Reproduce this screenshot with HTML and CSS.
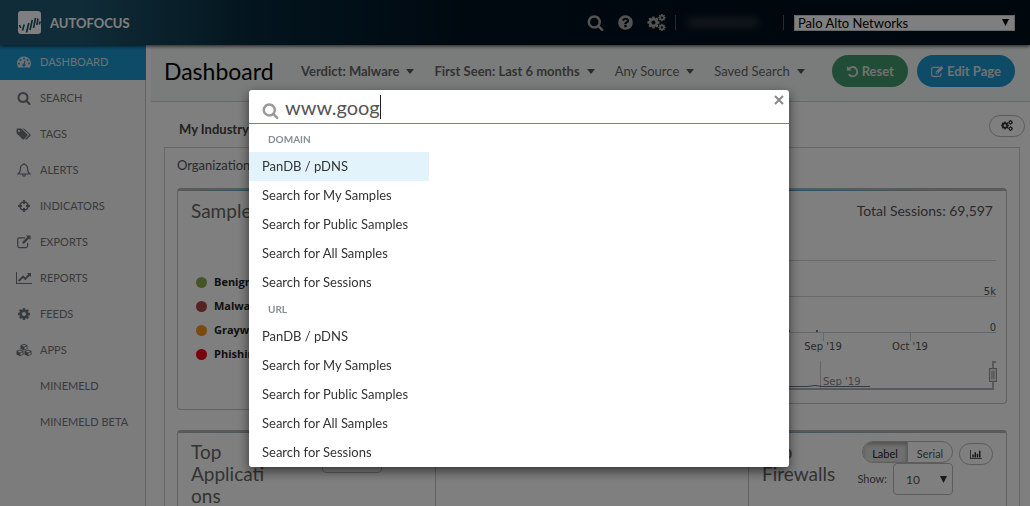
FILE: index.html
```html
<!DOCTYPE html>
<html lang="en">
<head>
<meta charset="utf-8">
<meta name="viewport" content="width=device-width, initial-scale=1">
<title>AutoFocus - Dashboard</title>
<link rel="stylesheet" href="styles.css">
</head>
<body>
<svg class="sprite" aria-hidden="true">
  <symbol id="i-search" viewBox="0 0 1792 1792"><path d="M1216 832q0-185-131.500-316.500t-316.500-131.500-316.500 131.500-131.500 316.500 131.500 316.500 316.500 131.500 316.500-131.500 131.500-316.500zm512 832q0 52-38 90t-90 38q-54 0-90-38l-343-342q-179 124-399 124-143 0-273.500-55.500t-225-150-150-225-55.500-273.500 55.500-273.500 150-225 225-150 273.500-55.500 273.500 55.500 225 150 150 225 55.500 273.500q0 220-124 399l343 343q37 37 37 90z"/></symbol>
  <symbol id="i-help" viewBox="0 0 1792 1792"><path d="M1024 1376v-192q0-14-9-23t-23-9h-192q-14 0-23 9t-9 23v192q0 14 9 23t23 9h192q14 0 23-9t9-23zm256-672q0-88-55.500-163t-138.500-116-170-41q-243 0-371 213-15 24 8 42l132 100q7 6 19 6 16 0 25-12 53-68 86-92 34-24 86-24 48 0 85.500 26t37.500 59q0 38-20 61t-68 45q-63 28-115.500 86.500t-52.500 125.500v36q0 14 9 23t23 9h192q14 0 23-9t9-23q0-19 21.500-49.500t54.500-49.500q32-18 49-28.500t46-35 44.500-48 28-60.500 12.500-81zm384 192q0 209-103 385.500t-279.500 279.500-385.500 103-385.500-103-279.500-279.500-103-385.500 103-385.500 279.500-279.500 385.500-103 385.500 103 279.500 279.500 103 385.500z"/></symbol>
  <symbol id="i-cog" viewBox="0 0 1792 1792"><path id="cog" d="M1152 896q0-106-75-181t-181-75-181 75-75 181 75 181 181 75 181-75 75-181zm512-109v222q0 12-8 23t-20 13l-185 28q-19 54-39 91 35 50 107 138 10 12 10 25t-9 23q-27 37-99 108t-94 71q-12 0-26-9l-138-108q-44 23-91 38-16 136-29 186-7 28-36 28h-222q-14 0-24.500-8.500t-11.500-21.500l-28-184q-49-16-90-37l-141 107q-10 9-25 9-14 0-25-11-126-114-165-168-7-10-7-23 0-12 8-23 15-21 51-66.500t54-70.500q-27-50-41-99l-183-27q-13-2-21-12.500t-8-23.500v-222q0-12 8-23t19-13l186-28q14-46 39-92-40-57-107-138-10-12-10-24 0-10 9-23 26-36 98.500-107.500t94.500-71.500q13 0 26 10l138 107q44-23 91-38 16-136 29-186 7-28 36-28h222q14 0 24.500 8.500t11.500 21.500l28 184q49 16 90 37l142-107q9-9 24-9 13 0 25 10 129 119 165 170 7 8 7 22 0 12-8 23-15 21-51 66.500t-54 70.500q26 50 41 98l183 28q13 2 21 12.500t8 23.500z"/></symbol>
  <symbol id="i-cogs" viewBox="0 0 1920 1792"><use href="#cog" transform="translate(-107 149) scale(.833)"/><use href="#cog" transform="translate(1088 -64) scale(.5)"/><use href="#cog" transform="translate(1088 960) scale(.5)"/></symbol>
  <symbol id="i-gauge" viewBox="0 0 14 14"><path fill-rule="evenodd" d="M7 1.500a7 7 0 0 1 5.900 10.700q-.2.300-.6.300H1.700q-.4 0-.6-.3A7 7 0 0 1 7 1.500zM2 7.500a1 1 0 1 0 0 2 1 1 0 0 0 0-2zM3.500 4a1 1 0 1 0 0 2 1 1 0 0 0 0-2zM7 2.500a1 1 0 1 0 0 2 1 1 0 0 0 0-2zM10.500 4a1 1 0 1 0 0 2 1 1 0 0 0 0-2zM12 7.500a1 1 0 1 0 0 2 1 1 0 0 0 0-2zM7.600 5.500l-.8 3a1.500 1.500 0 1 0 1 .3l.8-3z"/></symbol>
  <symbol id="i-tags" viewBox="0 0 15 14"><path fill-rule="evenodd" d="M0 2.500v3.300q0 .5.500 1l5.500 5.500q.7.700 1.400 0l3.500-3.500q.7-.7 0-1.400L5.400 1.900Q4.900 1.500 4.300 1.500H1q-1 0-1 1zM2.500 3a1 1 0 1 1 0 2 1 1 0 0 1 0-2z"/><path d="M6.100 1.500h.9q.6 0 1.100.4l5.800 5.500q.7.700 0 1.400l-3.500 3.500q-.7.700-1.500 0l-.3-.3 3.500-3.600q.6-.6 0-1.300z"/></symbol>
  <symbol id="i-bell" viewBox="0 0 14 14"><path class="line" d="M7 1.500C4.500 1.500 3.500 3.500 3.500 5.500c0 3-1 4.500-2.300 5.500h11.600c-1.300-1-2.300-2.500-2.300-5.500 0-2-1-4-3.500-4zM7 0v1.500M5.500 11.500q.2 1.700 1.500 1.700t1.500-1.700"/></symbol>
  <symbol id="i-target" viewBox="0 0 14 14"><circle class="line thick" cx="7" cy="7" r="4"/><path d="M6 1h2v4H6zM6 9h2v4H6zM1 6h4v2H1zM9 6h4v2H9z"/></symbol>
  <symbol id="i-export" viewBox="0 0 14 14"><path class="line" d="M8 2.800H2.500q-1.800 0-1.800 1.800v6.200q0 1.800 1.800 1.800h6.300q1.800 0 1.800-1.800V8"/><path d="M9 .5h4.500V5L12 3.600 6.700 9 5 7.300 10.400 2z"/></symbol>
  <symbol id="i-line" viewBox="0 0 16 14"><path d="M0 1h1v11h15v1H0zM15 2v4l-1.300-1.200L9.200 9.300 7 7.100l-3.600 3.600L2 9.300l5-5 2.200 2.200 3-3L11 2z"/></symbol>
  <symbol id="i-cubes" viewBox="0 0 18 14"><path fill-rule="evenodd" d="M9 0l4 1.600v4l-4 2-4-2v-4zM9 1L6.500 2.100 9 3.200l2.500-1.100zM9.500 4v2.400L12 5.200V3zM4.500 6.500l4 1.600v4l-4 2-4-2v-4zM4.500 7.500L2 8.600l2.500 1.100L7 8.600zM5 10.500v2.400l2.500-1.200V9.500zM13.500 6.500l4 1.600v4l-4 2-4-2v-4zM13.500 7.500L11 8.600l2.500 1.100L16 8.600zM14 10.500v2.400l2.500-1.200V9.500z"/></symbol>
  <symbol id="i-undo" viewBox="0 0 14 14"><path class="line wide" d="M3 4.400A5 5 0 1 1 3 10"/><path d="M1 1v5h5z"/></symbol>
  <symbol id="i-edit" viewBox="0 0 14 14"><path class="line" d="M9 2.600H2.500Q.7 2.600.7 4.400v6q0 1.800 1.800 1.800h6.500q1.800 0 1.800-1.800V8.500"/><path fill-rule="evenodd" d="M11 1.200l2.300 2.300-6 6H5V7.200zM6 7.600v1h1l.5-.5-1-1z"/></symbol>
  <symbol id="i-bars" viewBox="0 0 16 14"><path d="M0 1h1v11h15v1H0zM3 7h2v4H3zM6 4h2v7H6zM9 6h2v5H9zM12 2h2v9h-2z"/></symbol>
  <symbol id="i-close" viewBox="0 0 10 10"><path class="line wide" d="M1 1l8 8M9 1l-8 8"/></symbol>
</svg>

<header class="header">
  <a class="brand" href="#">
    <svg class="logo" viewBox="0 0 23 23" aria-hidden="true"><rect width="23" height="23" rx="3" fill="#fff"/><path d="M1.500 14l1.200 3M4.500 19.500l1.700-6M8.500 21.500l2.300-9.500M12 19l2.300-10M15.500 17l2-10M18.800 14l1.200-6.500M21.300 13.500l.9-3" stroke="#1b4b60" stroke-width="1.600" fill="none"/></svg>
    <span>AUTOFOCUS</span>
  </a>
  <div class="tools">
    <button class="tool" aria-label="Search"><svg><use href="#i-search"/></svg></button>
    <button class="tool" aria-label="Help"><svg><use href="#i-help"/></svg></button>
    <button class="tool" aria-label="Settings"><svg class="cogs"><use href="#i-cogs"/></svg></button>
    <div class="account" aria-hidden="true"><span class="smudge"></span></div>
    <select class="tenant" aria-label="Organization"><option>Palo Alto Networks</option></select>
  </div>
</header>

<div class="shell">
  <nav class="sidebar">
    <a class="active" href="#"><svg><use href="#i-gauge"/></svg>DASHBOARD</a>
    <a href="#"><svg><use href="#i-search"/></svg>SEARCH</a>
    <a href="#"><svg><use href="#i-tags"/></svg>TAGS</a>
    <a href="#"><svg><use href="#i-bell"/></svg>ALERTS</a>
    <a href="#"><svg><use href="#i-target"/></svg>INDICATORS</a>
    <a href="#"><svg><use href="#i-export"/></svg>EXPORTS</a>
    <a href="#"><svg><use href="#i-line"/></svg>REPORTS</a>
    <a href="#"><svg><use href="#i-cog"/></svg>FEEDS</a>
    <a href="#"><svg><use href="#i-cubes"/></svg>APPS</a>
    <a class="sub" href="#">MINEMELD</a>
    <a class="sub" href="#">MINEMELD BETA</a>
  </nav>

  <main class="main">
    <div class="topbar">
      <h1>Dashboard</h1>
      <div class="filters">
        <button class="filter set">Verdict: Malware</button>
        <button class="filter set">First Seen: Last 6 months</button>
        <button class="filter">Any Source</button>
        <button class="filter">Saved Search</button>
      </div>
      <div class="actions">
        <button class="pill green"><svg><use href="#i-undo"/></svg>Reset</button>
        <button class="pill blue"><svg><use href="#i-edit"/></svg>Edit Page</button>
      </div>
    </div>

    <div class="tabs">
      <a class="tab" href="#">My Industry</a>
      <button class="round" aria-label="Page settings"><svg><use href="#i-cogs"/></svg></button>
    </div>

    <section class="panel">
      <p class="crumb">Organization</p>
      <div class="cards">
        <section class="card samples">
          <h2>Samples</h2>
          <ul class="legend">
            <li><i class="dot benign"></i>Benign</li>
            <li><i class="dot malware"></i>Malware</li>
            <li><i class="dot grayware"></i>Grayware</li>
            <li><i class="dot phishing"></i>Phishing</li>
          </ul>
        </section>
        <section class="card sessions">
          <p class="total">Total Sessions: 69,597</p>
          <svg class="chart" viewBox="-1 0 400 160" role="img" aria-label="Sessions over time">
            <path d="M0 20.500h389M0 56.500h389" stroke="#d2d2d2"/>
            <path d="M0 92.500h389M216.500 92v9M303.500 92v9" stroke="#c0d0e0"/>
            <path d="M209 91h2M181 91h2" stroke="#777" stroke-width="2"/>
            <g class="axis">
              <text x="389" y="55" text-anchor="end">5k</text>
              <text x="389" y="91" text-anchor="end">0</text>
              <text x="216" y="110" text-anchor="middle">Sep '19</text>
              <text x="303" y="110" text-anchor="middle">Oct '19</text>
            </g>
            <path d="M213.500 121v27" stroke="#c8c8c8"/>
            <text class="mini" x="216" y="145">Sep '19</text>
            <path d="M0 146.500h200l8-1 8 1h47" stroke="#5c7480" fill="none"/>
            <path d="M0 149h386v-27h3" stroke="#b2b1b6" stroke-width="2" fill="none"/>
            <rect x="382.500" y="128.500" width="7" height="13" fill="#ebe7e8" stroke="#999"/>
            <path d="M385 131v8M387 131v8" stroke="#999"/>
          </svg>
        </section>
      </div>

      <div class="card tops">
        <section class="top">
          <h2>Top Applications</h2>
          <label class="show"><select aria-label="Show"><option>10</option></select></label>
        </section>
        <section class="top"></section>
        <section class="top">
          <h2>Top Firewalls</h2>
          <div class="controls">
            <div class="toggle"><button class="on">Label</button><button>Serial</button></div>
            <label class="show"><span>Show:</span><select><option>10</option></select></label>
          </div>
          <button class="round" aria-label="Chart type"><svg><use href="#i-bars"/></svg></button>
        </section>
      </div>
    </section>
  </main>
</div>

<div class="backdrop">
  <div class="modal" role="dialog" aria-label="Quick search">
    <div class="field">
      <svg><use href="#i-search"/></svg>
      <input type="text" value="www.goog" aria-label="Search"><span class="caret"></span>
      <button class="close" aria-label="Close"><svg><use href="#i-close"/></svg></button>
    </div>
    <div class="results">
      <h3>DOMAIN</h3>
      <button class="hit">PanDB / pDNS</button>
      <button>Search for My Samples</button>
      <button>Search for Public Samples</button>
      <button>Search for All Samples</button>
      <button>Search for Sessions</button>
      <h3>URL</h3>
      <button>PanDB / pDNS</button>
      <button>Search for My Samples</button>
      <button>Search for Public Samples</button>
      <button>Search for All Samples</button>
      <button>Search for Sessions</button>
    </div>
  </div>
</div>
</body>
</html>
```

FILE: styles.css
```css
* { box-sizing: border-box; }

html, body { height: 100%; }

body {
  margin: 0;
  overflow: hidden;
  background: #fff;
  color: #555;
  font: 13px/18px Lato, "Open Sans", sans-serif;
}

h1, h2, h3, p, ul { margin: 0; padding: 0; font-weight: 400; }
a { color: inherit; text-decoration: none; }
button, input, select { font: inherit; color: inherit; }
button { border: 0; padding: 0; background: none; cursor: pointer; }
svg { fill: currentColor; flex: none; }
.sprite { display: none; }
.line { fill: none; stroke: currentColor; stroke-width: 1.2; }
.thick { stroke-width: 1.6; }
.wide { stroke-width: 2; }

/* header */
.header {
  position: relative;
  z-index: 1;
  display: flex;
  align-items: center;
  justify-content: space-between;
  height: 45px;
  padding: 0 15px 0 18px;
  background: linear-gradient(90deg, #205870 0, #205870 8%, #06293c 25%, #001220 45%, #000e1a 100%);
  box-shadow: 0 1px 4px rgba(0, 0, 0, .8);
  color: #fff;
}
.brand { display: flex; align-items: center; gap: 9px; font-size: 13px; font-weight: 700; }
.logo { width: 23px; height: 23px; }
.tools { display: flex; align-items: center; color: #a8a8a8; }
.tool { display: flex; margin-right: 13px; }
.tool svg { width: 17px; height: 17px; }
.tool .cogs { width: 19px; }
.tool:nth-of-type(3) { margin-right: 9px; }
.account {
  display: flex;
  align-items: center;
  width: 109px;
  height: 15px;
  margin-right: 10px;
  padding-left: 12px;
  border: solid #555;
  border-width: 0 1px;
}
.smudge { width: 70px; height: 7px; background: #34393e; filter: blur(4px); }

select { appearance: none; border-radius: 0; }
.tenant {
  width: 221px;
  height: 16px;
  padding: 0 3px;
  border: 1px solid #ccc;
  background: #fff url("data:image/svg+xml,%3Csvg xmlns='http://www.w3.org/2000/svg' width='7' height='7'%3E%3Cpath d='M0 0h7L3.500 7z'/%3E%3C/svg%3E") no-repeat right 5px center;
  color: #000;
  line-height: 14px;
}

/* sidebar */
.shell { display: flex; height: calc(100% - 44px); margin-top: -1px; overflow: hidden; }
.sidebar {
  flex: none;
  width: 146px;
  background: #f8f8f8;
  border-right: 1px solid #c8c8c8;
  color: #70767a;
  font-size: 11px;
}
.sidebar a { display: flex; align-items: center; gap: 8px; height: 36px; padding-left: 16px; }
.sidebar svg { width: 16px; height: 14px; }
.sidebar .sub { padding-left: 40px; }
.sidebar .active { width: 146px; background: #1b96cf; color: #dfe3e5; }

/* page top */
.main { flex: 1; min-width: 0; padding: 1px 0 0 5px; }
.topbar {
  display: flex;
  align-items: center;
  height: 57px;
  padding: 0 15px 4px 13px;
  background: #f5f9f9;
  border-bottom: 1px solid #ccd0d2;
}
h1 { width: 137px; color: #000; font-size: 23px; line-height: 30px; }
.filters { display: flex; gap: 20px; }
.filter { display: flex; align-items: center; gap: 7px; white-space: nowrap; color: #666; }
.filter::after { content: ""; border: 4px solid transparent; border-top: 5px solid #555; border-bottom: 0; }
.set { font-weight: 700; }
.actions { display: flex; gap: 9px; margin-left: auto; }
.pill {
  display: flex;
  align-items: center;
  gap: 3px;
  height: 32px;
  padding: 0 14px;
  border-radius: 16px;
  color: #dfe3e5;
  font-weight: 700;
}
.pill svg { width: 13px; height: 13px; }
.green { background: #43996a; }
.blue { background: #1b96cf; }

.tabs { display: flex; align-items: center; justify-content: space-between; height: 45px; padding: 0 5px 0 28px; }
.tab { margin-top: 9px; color: #444; font-weight: 700; }
.round {
  display: flex;
  align-items: center;
  justify-content: center;
  width: 36px;
  height: 22px;
  border: 1px solid #bbb;
  border-radius: 11px;
  color: #333;
}
.round svg { width: 12px; height: 11px; }
.tabs .round { margin-top: 2px; }

.panel { margin: 0 10px 0 13px; padding: 8px 12px 0; border: 1px solid #ccd0d2; }
.crumb { line-height: 18px; }

/* cards */
.cards { display: flex; align-items: flex-start; justify-content: space-between; margin-top: 14px; }
.card {
  border: 1px solid #c4c4c4;
  border-top: 2px solid #b4b4b4;
  border-radius: 4px;
  background: linear-gradient(90deg, #b4b4b4 0, #4aa3cc 30%, #4aa3cc 60%, #b4b4b4 90%) no-repeat top / 100% 1px;
}
.samples { width: 33%; height: 222px; padding: 10px 13px; }
.sessions { width: 64%; height: 216px; padding: 10px 0 0; }
h2 { font-size: 19px; line-height: 22px; color: #666; }
.legend { list-style: none; margin-top: 48px; padding-left: 5px; }
.legend li {
  display: flex;
  align-items: center;
  gap: 7px;
  height: 24px;
  color: #222;
  font: 700 11px/18px "Open Sans", "Noto Sans", sans-serif;
}
.dot { width: 11px; height: 11px; border-radius: 50%; }
.benign { background: #8bab4e; }
.malware { background: #aa4643; }
.grayware { background: #f7941d; }
.phishing { background: #f00018; }
.total { padding-right: 13px; text-align: right; font-size: 14px; line-height: 22px; }
.chart { display: block; width: 400px; height: 160px; margin: 18px 0 0 auto; }
.axis, .mini { font: 10px "DejaVu Sans", sans-serif; fill: #555; }
.mini { fill: #888; }

.tops { display: grid; grid-template-columns: 257px 313px 1fr; margin-top: 20px; height: 222px; }
.top { display: flex; align-items: flex-start; padding: 9px 13px; }
.top + .top { border-left: 1px solid #c4c4c4; }
.top h2 { width: 75px; margin-right: 56px; overflow-wrap: anywhere; }
.top:last-child h2 { margin-right: auto; }
.controls { display: flex; flex-direction: column; align-items: flex-end; }
.toggle { display: flex; overflow: hidden; width: 91px; border: 1px solid #bbb; border-radius: 11px; }
.toggle button { flex: 1; height: 20px; padding-top: 4px; font-size: 11px; line-height: 16px; }
.toggle .on { background: #e0e0e0; border-right: 1px solid #bbb; box-shadow: inset 0 2px 4px rgba(0, 0, 0, .3); color: #222; }
.show { display: flex; align-items: center; gap: 6px; font-size: 11px; white-space: nowrap; }
.show select {
  width: 60px;
  height: 32px;
  padding: 2px 12px 0;
  border: 1px solid #bbb;
  border-radius: 4px;
  font-size: 12px;
  background: #fff url("data:image/svg+xml,%3Csvg xmlns='http://www.w3.org/2000/svg' width='7' height='7'%3E%3Cpath d='M0 0h7L3.500 7z' fill='%23333'/%3E%3C/svg%3E") no-repeat right 5px center;
}
.top .round { width: 34px; margin: 2px 0 0 6px; }

/* quick search dialog */
.backdrop {
  position: fixed;
  inset: 0;
  z-index: 2;
  display: flex;
  align-items: flex-start;
  justify-content: center;
  padding: 90px 0 0 8px;
  background: rgba(0, 0, 0, .5);
}
.modal {
  width: 540px;
  max-width: 100%;
  background: #fff;
  border-radius: 3px;
  box-shadow: 0 4px 12px rgba(0, 0, 0, .6);
}
.field {
  display: flex;
  align-items: center;
  height: 34px;
  padding: 0 5px 0 13px;
  border-bottom: 1px solid #1ba0dc;
}
.field > svg { width: 17px; height: 17px; margin: 8px 6px 0 0; color: #999; }
.field input {
  field-sizing: content;
  min-width: 0;
  height: 30px;
  padding: 0;
  border: 0;
  outline: 0;
  color: #555;
  font-size: 20px;
}
.caret { width: 1px; height: 24px; background: #222; }
.close { align-self: flex-start; margin: 5px 0 0 auto; color: #888; }
.close svg { display: block; width: 10px; height: 10px; }
.results { display: flex; flex-direction: column; padding-top: 3px; }
.results h3 { padding-left: 19px; color: #888f93; font-size: 10px; font-weight: 700; line-height: 25px; }
.results button {
  width: 180px;
  height: 29px;
  padding: 0 0 2px 13px;
  color: #333;
  text-align: left;
}
.results .hit { background: #e2f3fc; }
```
